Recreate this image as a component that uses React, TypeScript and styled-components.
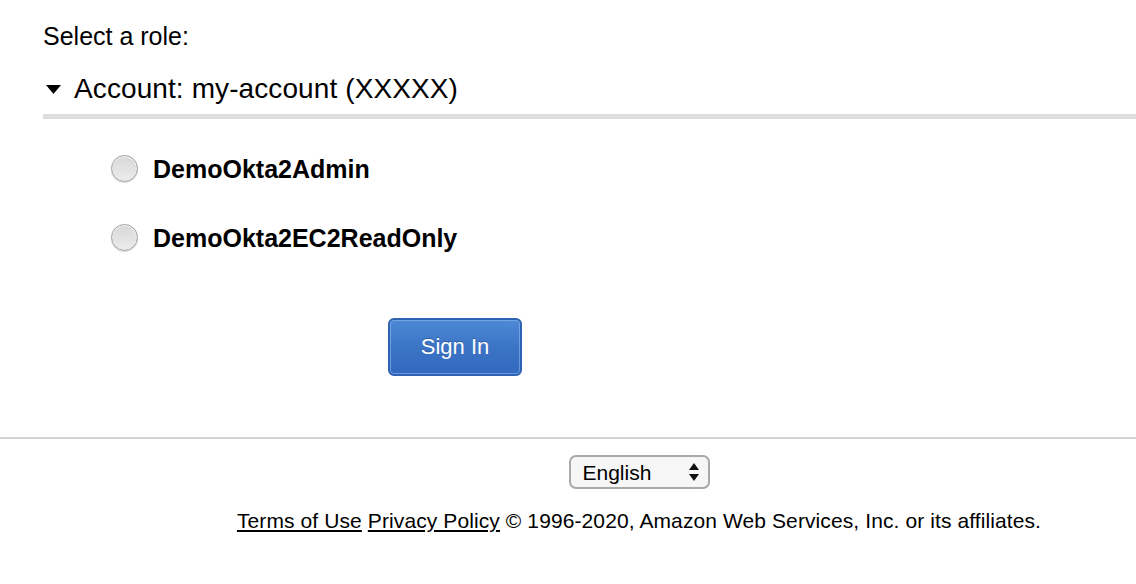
import React from 'react'
import styled, {createGlobalStyle} from 'styled-components'

const GlobalStyle = createGlobalStyle`
  html, body {
    margin: 0;
    padding: 0;
    background: #fff;
    color: #000;
    font-family: 'Liberation Sans', Arial, Helvetica, sans-serif;
  }
`

const Page = styled.div`
  width: 1136px;
  min-height: 584px;
  display: flex;
  flex-direction: column;
`

const Main = styled.form`
  display: flex;
  flex-direction: column;
  padding: 21px 0 0 43px;
`

const Title = styled.div`
  font-size: 25px;
  line-height: 30px;
`

const AccountHeader = styled.div`
  display: flex;
  align-items: center;
  gap: 13px;
  margin-top: 21px;
  padding: 0 0 8px 3px;
  border-bottom: 5px solid #dedede;
  font-size: 28px;
  line-height: 34px;
  letter-spacing: 0.1px;
`

const Caret = styled.svg`
  width: 15px;
  height: 9px;
  flex: none;
`

const RoleList = styled.div`
  display: flex;
  flex-direction: column;
  gap: 29px;
  margin-top: 29px;
  padding-left: 68px;
`

const RoleRow = styled.label`
  display: flex;
  align-items: center;
  gap: 15px;
  height: 40px;
  font-size: 25px;
  line-height: 30px;
  font-weight: bold;
  cursor: pointer;

  span {
    position: relative;
    top: 1px;
  }
`

const Radio = styled.input.attrs({type: 'radio'})`
  appearance: none;
  margin: 0;
  width: 27px;
  height: 27px;
  flex: none;
  border-radius: 50%;
  border: 1px solid #a0a0a0;
  background: linear-gradient(#d8d8d8, #ececec);
  box-shadow: inset 0 1px 1px rgba(255, 255, 255, 0.8), 0 1px 1px rgba(0, 0, 0, 0.15);
`

const SignInButton = styled.button`
  align-self: flex-start;
  margin: 61px 0 0 345px;
  width: 134px;
  height: 58px;
  border: 2px solid #2e63b3;
  border-radius: 6px;
  background: linear-gradient(#4d89d6, #3a72c4 55%, #336ac0);
  box-shadow: inset 0 0 0 1px rgba(150, 190, 240, 0.55);
  color: #fff;
  font-family: inherit;
  font-size: 22px;
  text-shadow: 0 -1px 0 rgba(0, 0, 0, 0.25);
  cursor: pointer;
`

const Footer = styled.footer`
  margin-top: 61px;
  border-top: 2px solid #d4d4d4;
  display: flex;
  flex-direction: column;
  align-items: center;
  padding: 16px 0 0 142px;
`

const SelectWrap = styled.div`
  position: relative;
  width: 141px;
  height: 34px;
`

const LanguageSelect = styled.select`
  appearance: none;
  width: 100%;
  height: 100%;
  margin: 0;
  padding: 0 0 0 12px;
  border: 2px solid #a9a9a9;
  border-radius: 7px;
  background: #f6f6f6;
  color: #000;
  font-family: inherit;
  font-size: 21px;
`

const SelectArrows = styled.svg`
  position: absolute;
  right: 11px;
  top: 8px;
  width: 10px;
  height: 18px;
  pointer-events: none;
`

const Legal = styled.div`
  margin-top: 20px;
  font-size: 21px;
  line-height: 24px;
  letter-spacing: 0.1px;
  white-space: nowrap;

  a {
    color: #000;
    text-decoration: underline;
  }
`

const roles = ['DemoOkta2Admin', 'DemoOkta2EC2ReadOnly']

export default function App() {
  return (
    <Page>
      <GlobalStyle />
      <Main onSubmit={e => e.preventDefault()}>
        <Title>Select a role:</Title>
        <AccountHeader>
          <Caret viewBox="0 0 15 9">
            <polygon points="0,0 15,0 7.5,9" fill="#000" />
          </Caret>
          Account: my-account (XXXXX)
        </AccountHeader>
        <RoleList>
          {roles.map(role => (
            <RoleRow key={role}>
              <Radio name="role" value={role} />
              <span>{role}</span>
            </RoleRow>
          ))}
        </RoleList>
        <SignInButton type="submit">Sign In</SignInButton>
      </Main>
      <Footer>
        <SelectWrap>
          <LanguageSelect defaultValue="en">
            <option value="en">English</option>
          </LanguageSelect>
          <SelectArrows viewBox="0 0 10 18">
            <polygon points="5,0 10,7 0,7" fill="#111" />
            <polygon points="0,11 10,11 5,18" fill="#111" />
          </SelectArrows>
        </SelectWrap>
        <Legal>
          <a href="#">Terms of Use</a> <a href="#">Privacy Policy</a> © 1996-2020, Amazon Web Services, Inc. or its
          affiliates.
        </Legal>
      </Footer>
    </Page>
  )
}
